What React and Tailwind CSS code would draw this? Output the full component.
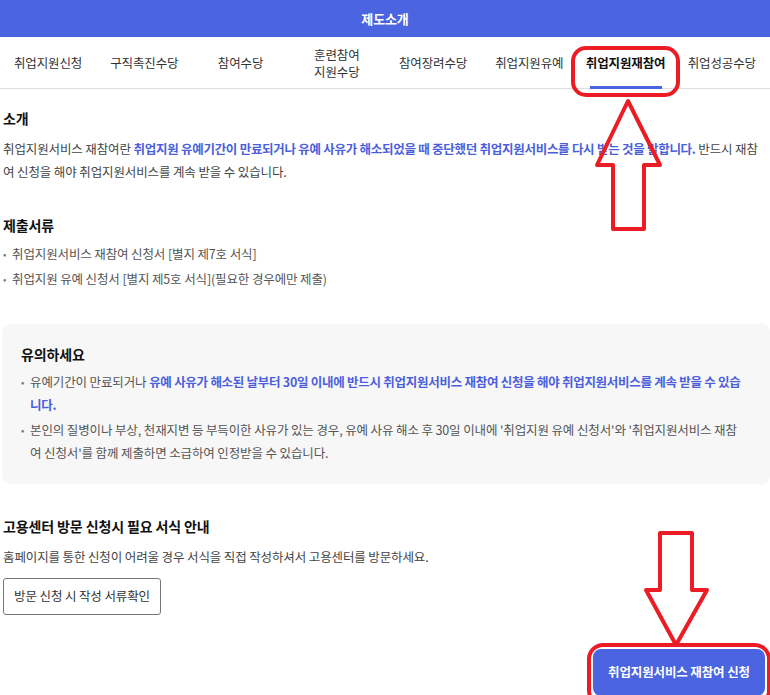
const tabs = [
  { label: "취업지원신청" },
  { label: "구직촉진수당" },
  { label: "참여수당" },
  { label: "훈련참여\n지원수당" },
  { label: "참여장려수당" },
  { label: "취업지원유예" },
  { label: "취업지원재참여", active: true },
  { label: "취업성공수당" },
];

const Hl = ({ children }) => (
  <span className="text-[#4b5fdc] font-bold tracking-[-0.022em]">{children}</span>
);

const Bullet = ({ children }) => (
  <li className="flex">
    <span className="w-[9px] shrink-0 text-[#777] text-[10px]">•</span>
    <span>{children}</span>
  </li>
);

const Annotations = () => (
  <svg
    className="absolute left-0 top-0 pointer-events-none"
    width="770"
    height="700"
    viewBox="0 0 770 700"
    fill="none"
    stroke="#ec1c24"
    strokeWidth="4"
    strokeLinejoin="round"
  >
    <rect x="573" y="48" width="105" height="47" rx="13" />
    <path d="M628 101 L597 165 L613 165 L613 229 L644 229 L644 165 L660 165 Z" />
    <path d="M660 533 L692 533 L692 590 L707 590 L676 645 L646 590 L660 590 Z" />
    <rect x="589" y="645" width="180" height="60" rx="14" />
  </svg>
);

export default function App() {
  return (
    <div className="relative w-[770px] bg-white text-[#444] text-[12.5px] font-['Noto_Sans_CJK_KR','Noto_Sans',sans-serif] tracking-[-0.01em]">
      <header className="h-[37px] bg-[#4b65e0] flex items-center justify-center text-white font-bold text-[13px]">
        제도소개
      </header>

      <nav className="grid grid-cols-8 h-[52px] border-b border-[#ddd]">
        {tabs.map((tab) => (
          <div
            key={tab.label}
            className={`relative flex items-center justify-center text-center whitespace-pre-line leading-[17px] text-[12.5px] ${
              tab.active ? "font-bold text-[#111]" : "text-[#333]"
            }`}
          >
            {tab.label}
            {tab.active && (
              <span className="absolute bottom-[-1px] left-1/2 -translate-x-1/2 w-[72px] h-[3px] bg-[#4b65e0]" />
            )}
          </div>
        ))}
      </nav>

      <main className="px-[3px] pb-[20px]">
        <section className="pt-[19px]">
          <h2 className="text-[14px] font-bold text-[#111] leading-[20px]">소개</h2>
          <p className="mt-[9px] leading-[23px]">
            취업지원서비스 재참여란{" "}
            <Hl>
              취업지원 유예기간이 만료되거나 유예 사유가 해소되었을 때 중단했던 취업지원서비스를 다시 받는 것을 말합니다.
            </Hl>{" "}
            반드시 재참여 신청을 해야 취업지원서비스를 계속 받을 수 있습니다.
          </p>
        </section>

        <section className="mt-[32px]">
          <h2 className="text-[14px] font-bold text-[#111] leading-[20px]">제출서류</h2>
          <ul className="mt-[7px] flex flex-col gap-[2px] leading-[23px] text-[#555]">
            <Bullet>취업지원서비스 재참여 신청서 [별지 제7호 서식]</Bullet>
            <Bullet>취업지원 유예 신청서 [별지 제5호 서식](필요한 경우에만 제출)</Bullet>
          </ul>
        </section>

        <section className="mt-[34px] ml-[-1px] mr-[-3px] bg-[#f7f7f7] rounded-lg pl-[19px] pr-[24px] pt-[20px] pb-[20px]">
          <h2 className="text-[14px] font-bold text-[#111] leading-[20px]">유의하세요</h2>
          <ul className="mt-[6px] flex flex-col gap-[2px] leading-[23px] text-[#555]">
            <Bullet>
              유예기간이 만료되거나{" "}
              <Hl>
                유예 사유가 해소된 날부터 30일 이내에 반드시 취업지원서비스 재참여 신청을 해야 취업지원서비스를 계속 받을 수 있습니다.
              </Hl>
            </Bullet>
            <Bullet>
              본인의 질병이나 부상, 천재지변 등 부득이한 사유가 있는 경우, 유예 사유 해소 후 30일 이내에 '취업지원 유예 신청서'와 '취업지원서비스 재참여 신청서'를 함께 제출하면 소급하여 인정받을 수 있습니다.
            </Bullet>
          </ul>
        </section>

        <section className="mt-[32px]">
          <h2 className="text-[14px] font-bold text-[#111] leading-[20px]">고용센터 방문 신청시 필요 서식 안내</h2>
          <p className="mt-[9px] leading-[23px]">
            홈페이지를 통한 신청이 어려울 경우 서식을 직접 작성하셔서 고용센터를 방문하세요.
          </p>
          <button className="mt-[10px] h-[37px] w-[158px] border border-[#777] rounded-[3px] bg-white text-[#333] text-[12.5px]">
            방문 신청 시 작성 서류확인
          </button>
        </section>

        <div className="mt-[34px] flex justify-end pr-[2px]">
          <button className="h-[47px] w-[172px] rounded-lg bg-[#4b65e0] text-white font-bold text-[12.5px]">
            취업지원서비스 재참여 신청
          </button>
        </div>
      </main>

      <Annotations />
    </div>
  );
}
